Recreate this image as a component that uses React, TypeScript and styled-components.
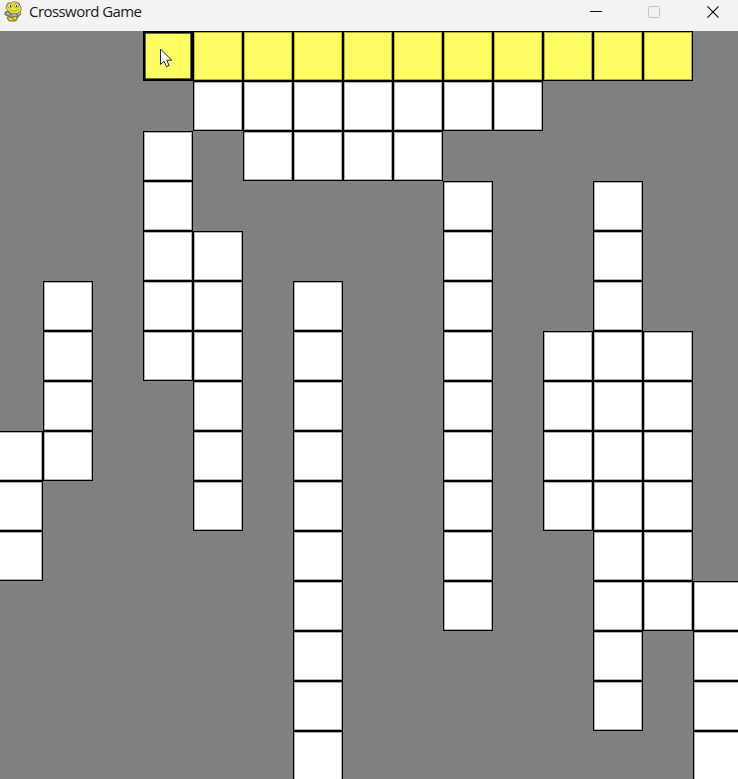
import React from 'react';
import styled, { createGlobalStyle } from 'styled-components';

const GlobalStyle = createGlobalStyle`
  html, body { margin: 0; padding: 0; overflow: hidden; }
  *, *::before, *::after { box-sizing: border-box; }
`;

const Window = styled.div`
  display: flex;
  flex-direction: column;
  width: 100%;
  height: 100vh;
  overflow: hidden;
  background: #808080;
  font-family: 'Open Sans', 'Noto Sans', sans-serif;
`;

const TitleBar = styled.header`
  display: flex;
  align-items: flex-start;
  flex: 0 0 31px;
  height: 31px;
  padding-left: 4px;
  background: #f3f3f3;
  color: #1a1a1a;
`;

const Title = styled.h1`
  margin: 0 auto 0 7px;
  font-size: 15px;
  font-weight: 400;
  line-height: 22px;
  letter-spacing: -0.56px;
  white-space: nowrap;
`;

const AppIcon = styled.svg`
  width: 18px;
  height: 21px;
  margin-top: 1px;
  flex: none;
`;

const Controls = styled.div`
  display: flex;
  gap: 12px;
  height: 24px;
  padding-right: 2px;
`;

const ControlButton = styled.button`
  display: flex;
  align-items: center;
  justify-content: center;
  width: 46px;
  height: 24px;
  padding: 0;
  border: 0;
  background: transparent;
  color: #111;
  &:disabled { color: #c4c4c4; }
  &:last-child { margin-left: 1px; }
`;

const Board = styled.main`
  display: grid;
  grid-template-columns: repeat(15, 50px);
  grid-auto-rows: 50px;
  flex: 1 1 0;
  min-height: 0;
  margin-left: -7px;
  overflow: hidden;
`;

const Cell = styled.div<{ $row: number; $col: number; $active: boolean; $selected: boolean }>`
  position: relative;
  grid-row: ${(p) => p.$row + 1};
  grid-column: ${(p) => p.$col + 1};
  border: ${(p) => (p.$selected ? 2 : 1)}px solid #000;
  background: ${(p) => (p.$active ? '#fffd64' : '#fff')};
  box-shadow: inset 0 0 0 1px ${(p) => (p.$selected ? 'rgba(0,0,0,.6)' : 'rgba(0,0,0,.32)')};
`;

const Pointer = styled.svg`
  position: absolute;
  left: 15px;
  top: 15px;
  width: 13px;
  height: 20px;
`;

const ROWS: number[][] = [
  [3, 4, 5, 6, 7, 8, 9, 10, 11, 12, 13],
  [4, 5, 6, 7, 8, 9, 10],
  [3, 5, 6, 7, 8],
  [3, 9, 12],
  [3, 4, 9, 12],
  [1, 3, 4, 6, 9, 12],
  [1, 3, 4, 6, 9, 11, 12, 13],
  [1, 4, 6, 9, 11, 12, 13],
  [0, 1, 4, 6, 9, 11, 12, 13],
  [0, 4, 6, 9, 11, 12, 13],
  [0, 6, 9, 12, 13],
  [6, 9, 12, 13, 14],
  [6, 12, 14],
  [6, 12, 14],
  [6, 14],
];

function SnakeIcon() {
  return (
    <AppIcon viewBox="0 0 18 21" aria-hidden="true">
      <path d="M5 14 10 13 14 16 12 20 5 20 3 17Z" fill="#b4ae2c" stroke="#6f6b28" strokeWidth=".8" />
      <path d="M3 3Q4 1 7 2Q9 0 12 1L15 2 16 5 17 6 17 10 14 13 8 13 4 10 2 7Z" fill="#e9e33a" stroke="#77742e" strokeWidth=".8" />
      <circle cx="6" cy="4.7" r="2.2" fill="#f6f3b4" stroke="#827e36" strokeWidth=".7" />
      <circle cx="12.5" cy="4.7" r="2.2" fill="#f6f3b4" stroke="#827e36" strokeWidth=".7" />
      <path d="M6 4h1v2H6zM12 4h1v2h-1z" fill="#333" />
      <path d="M6 9Q10 12 15 8" fill="none" stroke="#a29c29" strokeWidth=".8" />
      <path d="M1 11 4 10 7 13 12 13 16 11 17 13 14 16 10 15 8 17 4 15 1 14Z" fill="#929292" stroke="#555" strokeWidth=".7" />
      <path d="M3 12 5 13M8 14h4M14 13l2-1" stroke="#d8d8d8" />
      <path d="M5 18h3M10 17h2" stroke="#f1e948" strokeWidth="1.4" />
    </AppIcon>
  );
}

export default function App() {
  return (
    <>
      <GlobalStyle />
      <Window>
        <TitleBar>
          <SnakeIcon />
          <Title>Crossword Game</Title>
          <Controls>
            <ControlButton aria-label="Minimize">
              <svg width="12" height="12" viewBox="0 0 12 12"><path d="M0 5.5h12" stroke="currentColor" /></svg>
            </ControlButton>
            <ControlButton aria-label="Maximize" disabled>
              <svg width="12" height="12" viewBox="0 0 12 12"><rect x=".5" y=".5" width="11" height="11" rx="1" fill="none" stroke="currentColor" /></svg>
            </ControlButton>
            <ControlButton aria-label="Close">
              <svg width="12" height="12" viewBox="0 0 12 12"><path d="m.4.4 11.2 11.2m0-11.2L.4 11.6" stroke="currentColor" strokeWidth="1.2" /></svg>
            </ControlButton>
          </Controls>
        </TitleBar>
        <Board>
          {ROWS.flatMap((cols, row) =>
            cols.map((col) => {
              const selected = row === 0 && col === 3;
              return (
                <Cell key={`${row}-${col}`} $row={row} $col={col} $active={row === 0} $selected={selected}>
                  {selected && (
                    <Pointer viewBox="0 0 13 20">
                      <path d="M.5 1v15.5l3.6-3.3 2.4 5.4 2.6-1.1-2.3-5.3h4.9Z" fill="#fff" stroke="#222" strokeWidth="1" />
                    </Pointer>
                  )}
                </Cell>
              );
            }),
          )}
        </Board>
      </Window>
    </>
  );
}
